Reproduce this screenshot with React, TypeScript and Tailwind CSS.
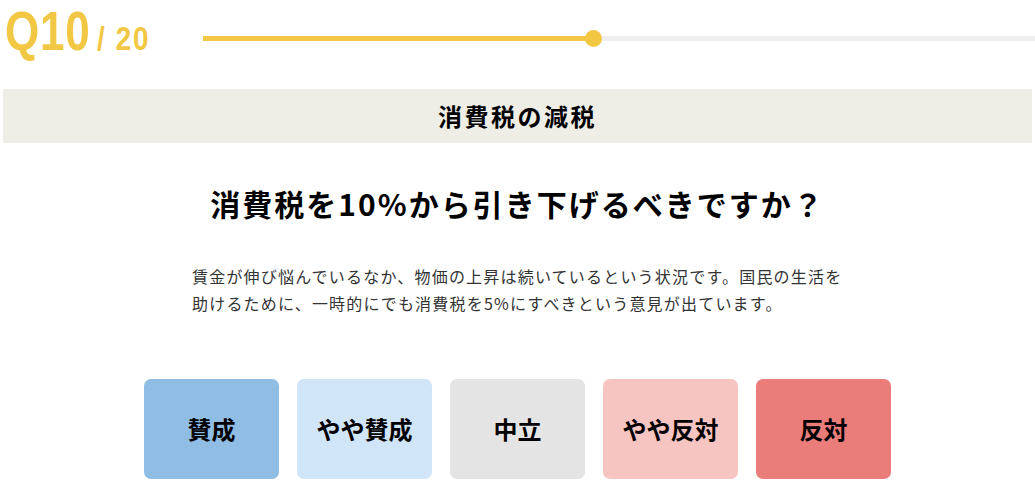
const choices = [
  { label: "賛成", bg: "bg-[#8fbde3]" },
  { label: "やや賛成", bg: "bg-[#d0e5f8]" },
  { label: "中立", bg: "bg-[#e4e4e4]" },
  { label: "やや反対", bg: "bg-[#f7c5c1]" },
  { label: "反対", bg: "bg-[#ea7c79]" },
];

const App = () => {
  return (
    <div className="w-[1035px] h-[486px] overflow-hidden bg-white font-['Noto_Sans_CJK_JP',sans-serif] text-black">
      {/* ヘッダー */}
      <div className="flex items-center h-[76px] pl-[5px]">
        <div className="flex items-baseline w-[198px] mb-[14px] text-[#f2c744] font-['Liberation_Sans',sans-serif] font-bold">
          <span className="inline-block w-[92px] text-[55px] leading-none tracking-[1px] scale-x-[0.8] origin-left">
            Q10
          </span>
          <span className="inline-block text-[34px] leading-none tracking-[2px] scale-x-[0.82] origin-left">
            / 20
          </span>
        </div>
        <div className="relative flex-1 h-[5px] bg-[#efefef]">
          <div className="absolute left-0 top-0 h-full w-[391px] bg-[#f2c744]" />
          <div className="absolute left-[382px] top-[-6px] w-[17px] h-[17px] rounded-full bg-[#f2c744]" />
        </div>
      </div>

      {/* テーマ */}
      <div className="mx-[3px] mt-[13px] h-[54px] bg-[#eeeee6] flex items-center justify-center">
        <h2 className="text-[24px] font-bold tracking-[2.5px]">消費税の減税</h2>
      </div>

      {/* 質問 */}
      <h1 className="mt-[40px] text-center text-[30px] font-bold leading-[40px] tracking-[2px]">
        消費税を10%から引き下げるべきですか？
      </h1>

      <p className="mt-[40px] ml-[192px] w-[662px] text-[16px] leading-[27px] tracking-[1.2px] text-[#333]">
        賃金が伸び悩んでいるなか、物価の上昇は続いているという状況です。国民の生活を助けるために、一時的にでも消費税を5%にすべきという意見が出ています。
      </p>

      {/* 回答ボタン */}
      <div className="mt-[62px] flex justify-center gap-[18px]">
        {choices.map((c) => (
          <button
            key={c.label}
            className={`w-[135px] h-[100px] rounded-[7px] ${c.bg} text-[24px] font-bold flex items-center justify-center`}
          >
            {c.label}
          </button>
        ))}
      </div>
    </div>
  );
};

export default App;
